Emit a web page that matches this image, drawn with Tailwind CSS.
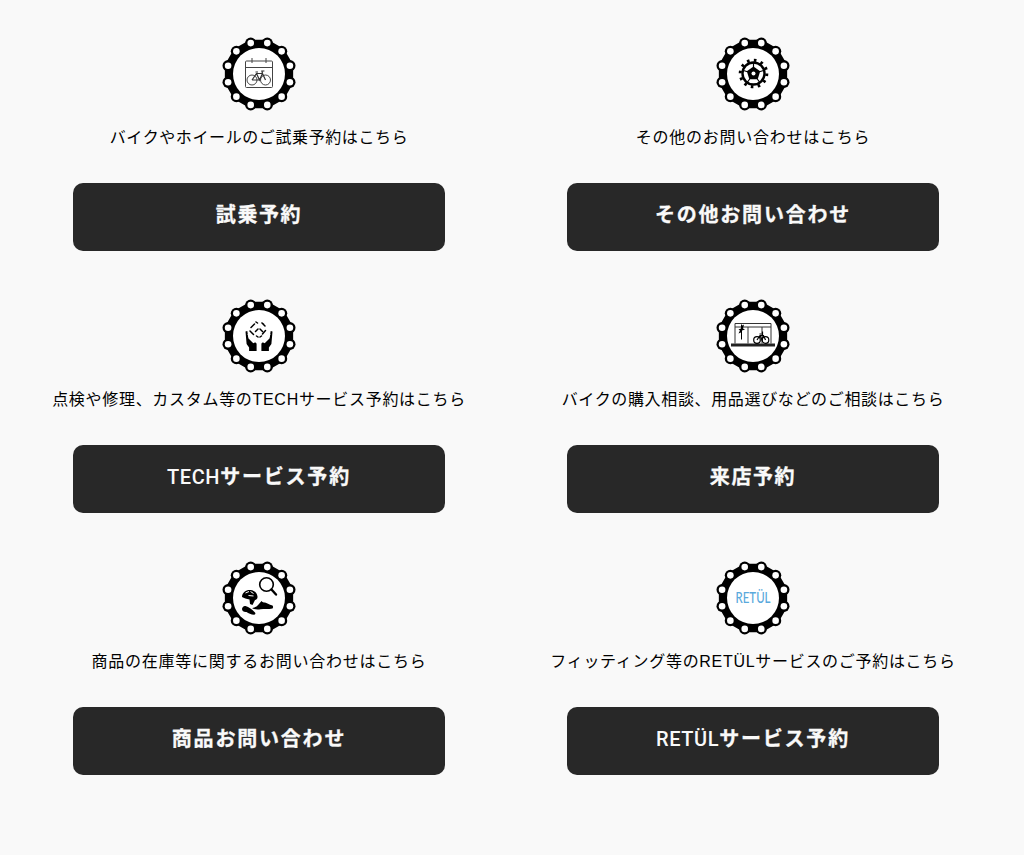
<!DOCTYPE html>
<html lang="ja">
<head>
<meta charset="utf-8">
<title>予約</title>
<script src="https://cdn.jsdelivr.net/npm/@tailwindcss/browser@4"></script>
</head>
<body class="bg-[#f9f9f9] m-0">
<svg width="0" height="0" class="absolute">
  <defs>
    <g id="chain">
      <circle cx="40" cy="40" r="30" fill="#000"/>
      <polygon points="48.28,9.1 62.63,17.37 70.9,31.72 70.9,48.28 62.63,62.63 48.28,70.9 31.72,70.9 17.37,62.63 9.1,48.28 9.1,31.72 17.37,17.37 31.72,9.1" fill="none" stroke="#000" stroke-width="6.500" stroke-linejoin="round"/>
      <g fill="#000">
        <circle cx="48.28" cy="9.1" r="5.6"/><circle cx="62.63" cy="17.37" r="5.6"/><circle cx="70.9" cy="31.72" r="5.6"/><circle cx="70.9" cy="48.28" r="5.6"/><circle cx="62.63" cy="62.63" r="5.6"/><circle cx="48.28" cy="70.9" r="5.6"/><circle cx="31.72" cy="70.9" r="5.6"/><circle cx="17.37" cy="62.63" r="5.6"/><circle cx="9.1" cy="48.28" r="5.6"/><circle cx="9.1" cy="31.72" r="5.6"/><circle cx="17.37" cy="17.37" r="5.6"/><circle cx="31.72" cy="9.1" r="5.6"/>
      </g>
      <g fill="#fff">
        <circle cx="48.28" cy="9.1" r="3.3"/><circle cx="62.63" cy="17.37" r="3.3"/><circle cx="70.9" cy="31.72" r="3.3"/><circle cx="70.9" cy="48.28" r="3.3"/><circle cx="62.63" cy="62.63" r="3.3"/><circle cx="48.28" cy="70.9" r="3.3"/><circle cx="31.72" cy="70.9" r="3.3"/><circle cx="17.37" cy="62.63" r="3.3"/><circle cx="9.1" cy="48.28" r="3.3"/><circle cx="9.1" cy="31.72" r="3.3"/><circle cx="17.37" cy="17.37" r="3.3"/><circle cx="31.72" cy="9.1" r="3.3"/>
      </g>
      <circle cx="40" cy="40" r="26" fill="#fff"/>
    </g>
  </defs>
</svg>

<main class="grid grid-cols-[372px_372px] gap-x-[122px] gap-y-[45px] pl-[73px] pt-[34px] font-['Liberation_Sans','Noto_Sans_CJK_JP',sans-serif] text-black">

  <section class="flex flex-col items-center">
    <svg viewBox="0 0 80 80" class="w-20 h-20 block">
      <use href="#chain"/>
      <rect x="26.500" y="27" width="27" height="26.500" rx="1" fill="none" stroke="#444" stroke-width="1"/>
      <path d="M26.500 33.500h27M33 24v5M47 24v5" stroke="#444" stroke-width="1" fill="none"/>
      <g fill="none" stroke="#333" stroke-width="0.9">
        <circle cx="33" cy="46" r="5"/><circle cx="46.500" cy="46" r="5"/>
        <path d="M33 46l4.500-6.500h6L46.500 46M37.500 39.500l3 6.500 3-6.500M33 46h7.500M36.500 38h2.500M43.500 39.500l-.6-2.500h2.500" stroke-width="1.200"/>
      </g>
    </svg>
    <p class="mt-[12px] h-6 leading-6 text-base tracking-[0.6px] whitespace-nowrap">バイクやホイールのご試乗予約はこちら</p>
    <a class="mt-[33px] flex items-center justify-center w-full h-[68px] pb-[4px] rounded-[10px] bg-[#282828] text-[#f9f9f9] text-[20px] font-bold tracking-[1.6px] [-webkit-text-stroke:0.3px_#f9f9f9]">試乗予約</a>
  </section>

  <section class="flex flex-col items-center">
    <svg viewBox="0 0 80 80" class="w-20 h-20 block">
      <use href="#chain"/>
      <circle cx="40.500" cy="39.500" r="13.300" fill="none" stroke="#000" stroke-width="3" stroke-dasharray="2.600 4.360"/>
      <circle cx="40.500" cy="39.500" r="11" fill="none" stroke="#000" stroke-width="2.400"/>
      <path d="M40.500 32.500l6.700 4.800-2.500 8h-8.400l-2.500-8z" fill="#000"/>
      <path d="M40.500 29v4M30.500 36.500l4 1.200M50.500 36.500l-4 1.200M34.500 48l2.200-3M46.500 48l-2.200-3" stroke="#000" stroke-width="1.200"/>
      <circle cx="40.500" cy="39.500" r="2" fill="#fff"/>
    </svg>
    <p class="mt-[12px] h-6 leading-6 text-base tracking-[0.75px] whitespace-nowrap">その他のお問い合わせはこちら</p>
    <a class="mt-[33px] flex items-center justify-center w-full h-[68px] pb-[4px] rounded-[10px] bg-[#282828] text-[#f9f9f9] text-[20px] font-bold tracking-[1.8px] [-webkit-text-stroke:0.3px_#f9f9f9]">その他お問い合わせ</a>
  </section>

  <section class="flex flex-col items-center">
    <svg viewBox="0 0 80 80" class="w-20 h-20 block">
      <use href="#chain"/>
      <g transform="translate(0 -1.500)" fill="none" stroke="#000" stroke-width="1.500" stroke-linecap="round">
        <path d="M35.500 29.500l-3.500 3.500M44.500 29.500l-1.500-1M37 27.500l1.500 1M43 28.500l3 3M31 36.500l3.500 3.500M46.500 36l-3 3.500M36.500 37l2.500-2.500M41 34.500l2.500 2.500M37.500 41.500l1.500 1M42.500 41.500l-1.500 1"/>
      </g>
      <g transform="translate(0 -2)">
        <path d="M26.500 37.500l1.800-.6 1.200 7.600 4.800 4.800c1.400-1.400 3-1 3.300.6v7.100h-7.500v-3.500l-2.500-3.500zM53.500 37.500l-1.800-.6-1.200 7.600-4.800 4.800c-1.400-1.400-3-1-3.300.6v7.100h7.500v-3.500l2.500-3.500z" fill="#000"/>
        <path d="M30.500 43.500l4.500 4.500M49.500 43.500l-4.500 4.500M29 40l1 3.500M51 40l-1 3.500" stroke="#fff" stroke-width="1" fill="none"/>
      </g>
    </svg>
    <p class="mt-[12px] h-6 leading-6 text-base tracking-[0.7px] whitespace-nowrap">点検や修理、カスタム等のTECHサービス予約はこちら</p>
    <a class="mt-[33px] flex items-center justify-center w-full h-[68px] pb-[4px] rounded-[10px] bg-[#282828] text-[#f9f9f9] text-[20px] font-bold tracking-[1.8px] [-webkit-text-stroke:0.3px_#f9f9f9]"><span class="font-['Roboto'] font-medium tracking-[0.6px] [-webkit-text-stroke:0]">TECH</span>サービス予約</a>
  </section>

  <section class="flex flex-col items-center">
    <svg viewBox="0 0 80 80" class="w-20 h-20 block">
      <use href="#chain"/>
      <g transform="translate(0 -1)">
        <path d="M22 48.500V28.500h36v20M22 32h36M35 32v16.500M49 32v16.500" fill="none" stroke="#333" stroke-width="1"/>
        <path d="M18 48.500h44v3H18z" fill="#222"/>
        <path d="M28 29l1.500 1.500 1.500-1-1 4 2 1-3 1v9h-1v-7l-2.500 1 1.500-3-1.500-1 2.500-1z" fill="#000"/>
        <g fill="none" stroke="#000" stroke-width="1.200">
          <circle cx="44" cy="45" r="3.300"/><circle cx="52.500" cy="45" r="3.300"/>
          <path d="M44 45l3-4.500h3.500l2 4.500M47 40.500l2 4.500 1.500-4.500M49.500 36.500v4M46.500 39h2"/>
        </g>
      </g>
    </svg>
    <p class="mt-[12px] h-6 leading-6 text-base tracking-[0.65px] whitespace-nowrap">バイクの購入相談、用品選びなどのご相談はこちら</p>
    <a class="mt-[33px] flex items-center justify-center w-full h-[68px] pb-[4px] rounded-[10px] bg-[#282828] text-[#f9f9f9] text-[20px] font-bold tracking-[1.6px] [-webkit-text-stroke:0.3px_#f9f9f9]">来店予約</a>
  </section>

  <section class="flex flex-col items-center">
    <svg viewBox="0 0 80 80" class="w-20 h-20 block">
      <use href="#chain"/>
      <circle cx="47.500" cy="26.500" r="6.800" fill="none" stroke="#000" stroke-width="1.600"/>
      <path d="M52.500 31.500l4.500 5" stroke="#000" stroke-width="2.400" stroke-linecap="round"/>
      <path d="M23 38.500c.5-4.500 4.500-7 8.500-6.500 4 .3 6.500 3 7 6.500.2 2-1 3-2.500 3.500l-2.500 5-2.500-1-.5-4.500c-3-.5-5.500-1.500-7.500-2.500z" fill="#000"/>
      <path d="M26.500 35l3.500-1.500M31.500 33.500l3 2M29.500 37.500l5 .5" stroke="#fff" stroke-width="1" fill="none"/>
      <path d="M33.500 50c2.500-.5 4.500-1.500 6-3.500l3-3.500c.8 1.200 2.200 1.500 3.500 1.500 1.500 0 4 2.500 7.500 3 .8.800.8 2.500 0 3-4 1-8.500.3-12 .8-2.500.4-5.500 .4-8-.8z" fill="#000"/>
      <path d="M23 51c0-2 2-3.500 3.500-3 3.500 1 6.500 3.500 9.500 6.500.8 1 .3 2.200-1 2.300-3-.3-5.500-1.300-7.500-2.800-2.500.3-4.500-1-4.500-3z" fill="#000"/>
    </svg>
    <p class="mt-[12px] h-6 leading-6 text-base tracking-[0.75px] whitespace-nowrap">商品の在庫等に関するお問い合わせはこちら</p>
    <a class="mt-[33px] flex items-center justify-center w-full h-[68px] pb-[4px] rounded-[10px] bg-[#282828] text-[#f9f9f9] text-[20px] font-bold tracking-[1.8px] [-webkit-text-stroke:0.3px_#f9f9f9]">商品お問い合わせ</a>
  </section>

  <section class="flex flex-col items-center">
    <svg viewBox="0 0 80 80" class="w-20 h-20 block">
      <use href="#chain"/>
      <text x="40" y="45" text-anchor="middle" textLength="35" lengthAdjust="spacingAndGlyphs" font-family="Lato, sans-serif" font-size="14.500" font-weight="500" fill="#5aa9dc">RETÜL</text>
    </svg>
    <p class="mt-[12px] h-6 leading-6 text-base tracking-[0.7px] whitespace-nowrap">フィッティング等のRETÜLサービスのご予約はこちら</p>
    <a class="mt-[33px] flex items-center justify-center w-full h-[68px] pb-[4px] rounded-[10px] bg-[#282828] text-[#f9f9f9] text-[20px] font-bold tracking-[1.8px] [-webkit-text-stroke:0.3px_#f9f9f9]"><span class="font-['Roboto'] font-medium tracking-[0.6px] [-webkit-text-stroke:0]">RETÜL</span>サービス予約</a>
  </section>

</main>
</body>
</html>
